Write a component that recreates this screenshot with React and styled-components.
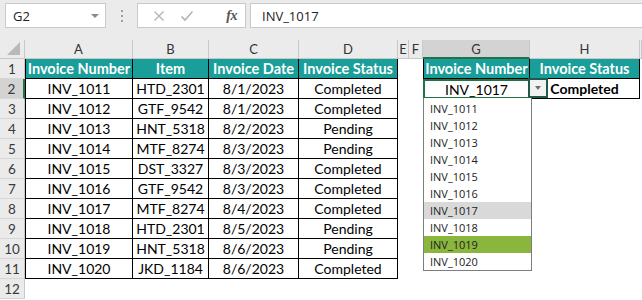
import React from "react";
import styled, { createGlobalStyle } from "styled-components";

const GlobalStyle = createGlobalStyle`
  html, body { margin: 0; padding: 0; background: #fff; }
  body { font-family: Lato, "Liberation Sans", sans-serif; }
`;

const COLS = [
  { id: "A", w: 108 },
  { id: "B", w: 76 },
  { id: "C", w: 90 },
  { id: "D", w: 99 },
  { id: "E", w: 11 },
  { id: "F", w: 14 },
  { id: "G", w: 107 },
  { id: "H", w: 110 },
  { id: "", w: 2 },
];

const DATA = [
  ["INV_1011", "HTD_2301", "8/1/2023", "Completed"],
  ["INV_1012", "GTF_9542", "8/1/2023", "Completed"],
  ["INV_1013", "HNT_5318", "8/2/2023", "Pending"],
  ["INV_1014", "MTF_8274", "8/3/2023", "Pending"],
  ["INV_1015", "DST_3327", "8/3/2023", "Completed"],
  ["INV_1016", "GTF_9542", "8/3/2023", "Completed"],
  ["INV_1017", "MTF_8274", "8/4/2023", "Completed"],
  ["INV_1018", "HTD_2301", "8/5/2023", "Pending"],
  ["INV_1019", "HNT_5318", "8/6/2023", "Pending"],
  ["INV_1020", "JKD_1184", "8/6/2023", "Completed"],
];

const HEADERS = ["Invoice Number", "Item", "Invoice Date", "Invoice Status"];

const Page = styled.div`
  width: 642px;
  height: 300px;
  overflow: hidden;
  background: #fff;
`;

const TopBar = styled.div`
  height: 40px;
  box-sizing: border-box;
  background: #ebebeb;
  display: flex;
  align-items: flex-start;
  padding: 3px 0 0 5px;
`;

const NameBox = styled.div`
  width: 101px;
  height: 25px;
  box-sizing: border-box;
  background: #fff;
  border: 1px solid #c9c9c9;
  display: flex;
  align-items: center;
  justify-content: space-between;
  padding: 0 6px 0 7px;
  font-family: "Open Sans", "Noto Sans", sans-serif;
  font-size: 13px;
  color: #222;
`;

const Caret = styled.span`
  width: 0;
  height: 0;
  border-left: 4px solid transparent;
  border-right: 4px solid transparent;
  border-top: 4px solid #8a8a8a;
`;

const DotsWrap = styled.div`
  width: 31px;
  height: 25px;
  display: flex;
  flex-direction: column;
  align-items: center;
  justify-content: center;
  gap: 3px;
`;

const Dot = styled.span`
  width: 2px;
  height: 2px;
  background: #a0a0a0;
`;

const FxBox = styled.div`
  width: 109px;
  height: 25px;
  box-sizing: border-box;
  background: #fff;
  border: 1px solid #c9c9c9;
  display: flex;
  align-items: center;
  padding: 0 8px 0 12px;
  margin-right: 4px;
`;

const FxIcon = styled.span`
  display: flex;
  align-items: center;
  justify-content: center;
  width: ${(p) => p.$w}px;
`;

const FxText = styled.span`
  font-family: "Liberation Serif", "DejaVu Serif", serif;
  font-style: italic;
  font-weight: 700;
  font-size: 14px;
  color: #555;
  margin-left: auto;
  letter-spacing: -0.5px;
`;

const FormulaInput = styled.div`
  flex: 1;
  height: 25px;
  box-sizing: border-box;
  background: #fff;
  border: 1px solid #c9c9c9;
  border-right: none;
  display: flex;
  align-items: center;
  padding-left: 11px;
  font-family: "Open Sans", "Noto Sans", sans-serif;
  font-size: 13px;
  color: #222;
`;

const Sheet = styled.div`
  position: relative;
  display: grid;
  grid-template-columns: 25px ${COLS.map((c) => c.w + "px").join(" ")};
  grid-template-rows: 19px repeat(12, 20px);
`;

const ColHead = styled.div`
  box-sizing: border-box;
  background: ${(p) => (p.$active ? "#d3d3d3" : "#ebebeb")};
  border-right: 1px solid #c8c8c8;
  border-bottom: ${(p) => (p.$active ? "2px solid #217346" : "1px solid #c8c8c8")};
  display: flex;
  align-items: center;
  justify-content: center;
  font-family: Lato, "Liberation Sans", sans-serif;
  font-size: 13px;
  color: #333;
  overflow: hidden;
`;

const Corner = styled.div`
  position: relative;
  box-sizing: border-box;
  background: #ebebeb;
  border-right: 1px solid #c8c8c8;
  border-bottom: 1px solid #c8c8c8;
`;

const CornerTri = styled.span`
  position: absolute;
  right: 4px;
  bottom: 3px;
  width: 0;
  height: 0;
  border-left: 13px solid transparent;
  border-bottom: 13px solid #b9b9b9;
`;

const RowHead = styled.div`
  box-sizing: border-box;
  background: ${(p) => (p.$active ? "#d3d3d3" : "#ebebeb")};
  border-right: ${(p) => (p.$active ? "2px solid #217346" : "1px solid #c8c8c8")};
  border-bottom: 1px solid #d6d6d6;
  display: flex;
  align-items: center;
  justify-content: center;
  font-family: Lato, "Liberation Sans", sans-serif;
  font-size: 13.5px;
  color: #3a3a3a;
`;

const Cell = styled.div`
  box-sizing: border-box;
  display: flex;
  align-items: center;
  justify-content: center;
  white-space: nowrap;
  overflow: hidden;
  font-family: Lato, "Liberation Sans", sans-serif;
  font-size: ${(p) => (p.$head ? "14.5px" : "14px")};
  background: ${(p) => (p.$head ? "#199e99" : "#fff")};
  color: ${(p) => (p.$head ? "#fff" : "#000")};
  font-weight: ${(p) => (p.$head || p.$bold ? 700 : 400)};
  border-right: ${(p) => (p.$boxed ? "1px solid #000" : "none")};
  border-bottom: ${(p) => (p.$boxed ? "1px solid #000" : "none")};
  border-left: ${(p) => (p.$edge ? "1px solid #000" : "none")};
  box-shadow: ${(p) => (p.$selected ? "inset 0 0 0 2px #217346" : "none")};
`;

const DropButton = styled.div`
  position: absolute;
  left: 528px;
  top: 38px;
  width: 20px;
  height: 20px;
  box-sizing: border-box;
  border: 2px solid #1f5a4d;
  background: #f2f2f2;
  display: flex;
  align-items: center;
  justify-content: center;
`;

const DropTri = styled.span`
  width: 0;
  height: 0;
  border-left: 3.5px solid transparent;
  border-right: 3.5px solid transparent;
  border-top: 4px solid #707070;
`;

const DropList = styled.div`
  position: absolute;
  left: 423px;
  top: 58px;
  width: 109px;
  box-sizing: border-box;
  border: 1px solid #7d7d7d;
  border-top: none;
  background: #fff;
  padding-top: 2px;
`;

const DropItem = styled.div`
  height: 17px;
  display: flex;
  align-items: center;
  padding-left: 6px;
  font-family: "Open Sans", "Noto Sans", sans-serif;
  font-size: 11px;
  color: #222;
  background: ${(p) =>
    p.$state === "hover" ? "#8ab63d" : p.$state === "current" ? "#d9d9d9" : "#fff"};
`;

function cellProps(r, col) {
  const ci = ["A", "B", "C", "D"].indexOf(col);
  if (ci >= 0) {
    if (r === 1) return { text: HEADERS[ci], head: true, boxed: true, edge: ci === 0 };
    if (r >= 2 && r <= 11)
      return { text: DATA[r - 2][ci], boxed: true, edge: ci === 0 };
  }
  if (col === "G" || col === "H") {
    if (r === 1)
      return {
        text: col === "G" ? "Invoice Number" : "Invoice Status",
        head: true,
        boxed: true,
        edge: col === "G",
      };
    if (r === 2 && col === "G") return { text: "INV_1017", selected: true };
    if (r === 2 && col === "H") return { text: "Completed", bold: true, boxed: true };
  }
  return { text: "" };
}

const ITEMS = DATA.map((d) => d[0]);

export default function App() {
  const rows = Array.from({ length: 12 }, (_, i) => i + 1);
  return (
    <Page>
      <GlobalStyle />
      <TopBar>
        <NameBox>
          G2
          <Caret />
        </NameBox>
        <DotsWrap>
          <Dot />
          <Dot />
          <Dot />
        </DotsWrap>
        <FxBox>
          <FxIcon $w={18}>
            <svg width="12" height="12" viewBox="0 0 12 12">
              <path d="M1.5 1.5 L10.5 10.5 M10.5 1.5 L1.5 10.5" stroke="#b4b4b4" strokeWidth="1.4" fill="none" />
            </svg>
          </FxIcon>
          <FxIcon $w={38}>
            <svg width="14" height="12" viewBox="0 0 14 12">
              <path d="M1.5 6.5 L5 10 L12.5 1.5" stroke="#b4b4b4" strokeWidth="1.6" fill="none" />
            </svg>
          </FxIcon>
          <FxText>fx</FxText>
        </FxBox>
        <FormulaInput>INV_1017</FormulaInput>
      </TopBar>
      <Sheet>
        <Corner>
          <CornerTri />
        </Corner>
        {COLS.map((c, i) => (
          <ColHead key={"h" + i} $active={c.id === "G"}>
            {c.id}
          </ColHead>
        ))}
        {rows.map((r) => (
          <React.Fragment key={r}>
            <RowHead $active={r === 2}>{r}</RowHead>
            {COLS.map((c, i) => {
              const p = cellProps(r, c.id);
              return (
                <Cell
                  key={r + "-" + i}
                  $head={p.head}
                  $bold={p.bold}
                  $boxed={p.boxed}
                  $edge={p.edge}
                  $selected={p.selected}
                >
                  {p.text}
                </Cell>
              );
            })}
          </React.Fragment>
        ))}
        <DropButton>
          <DropTri />
        </DropButton>
        <DropList>
          {ITEMS.map((it) => (
            <DropItem
              key={it}
              $state={it === "INV_1019" ? "hover" : it === "INV_1017" ? "current" : ""}
            >
              {it}
            </DropItem>
          ))}
        </DropList>
      </Sheet>
    </Page>
  );
}
